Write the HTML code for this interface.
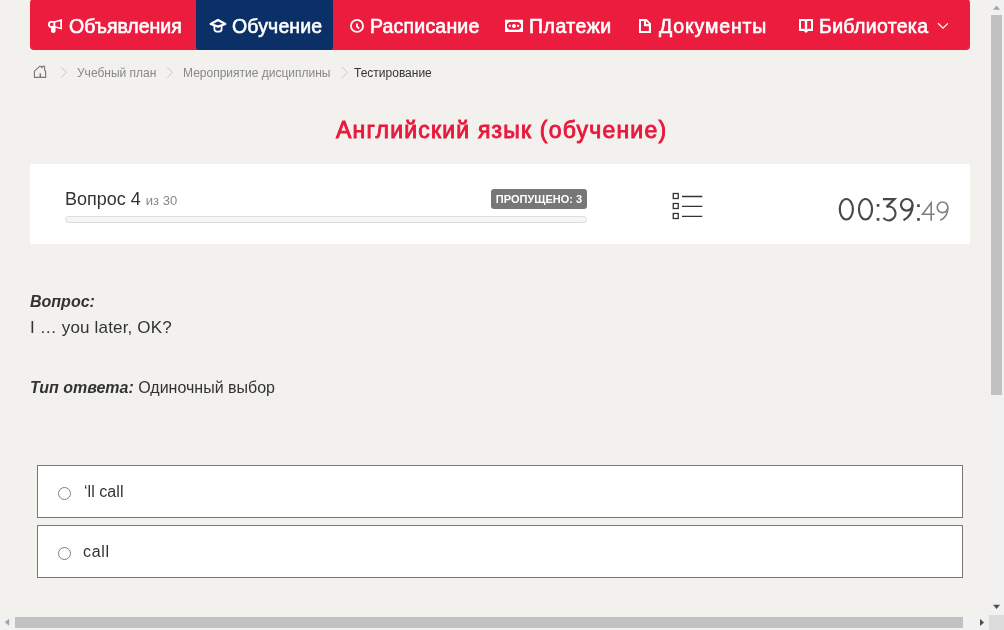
<!DOCTYPE html>
<html><head><meta charset="utf-8">
<style>
*{box-sizing:border-box;margin:0;padding:0}
.ot,.lbl,.bc,#q,#badge,#title,.ni{will-change:transform}
html,body{width:1004px;height:630px;overflow:hidden;background:#f2f1ee;font-family:"Liberation Sans",sans-serif;color:#333;position:relative}
#nav{position:absolute;left:30px;top:-1px;width:940px;height:51px;background:#ec1c3f;border-radius:4px}
#act{position:absolute;left:196px;top:-1px;width:137px;height:51px;background:#0a3067;border-radius:3px}
.ni{position:absolute;top:16px;color:#fff;font-weight:normal;-webkit-text-stroke:0.6px #fff;font-size:19.5px;line-height:20px;white-space:nowrap;transform-origin:0 0}
.ic{position:absolute;top:14px;width:24px;height:24px}
.bc{position:absolute;top:66px;font-size:12px;line-height:14px;color:#888;white-space:nowrap}
.chev{position:absolute;top:66px;width:8px;height:13px}
#title{position:absolute;left:336px;top:116.5px;color:#e8193d;font-weight:normal;-webkit-text-stroke:0.9px #e8193d;font-size:23px;line-height:26px;white-space:nowrap;letter-spacing:1.2px}
#card{position:absolute;left:30px;top:164px;width:940px;height:80px;background:#fff}
#q{position:absolute;left:65px;top:189px;font-size:18px;line-height:20px;color:#333;white-space:nowrap}
#q small{font-size:13px;color:#888}
#prog{position:absolute;left:65px;top:216px;width:522px;height:7px;border:1px solid #ddd;border-radius:4px;background:#f5f5f5}
#badge{position:absolute;left:491px;top:189px;width:96px;height:20px;background:#777;border-radius:3px;color:#fff;font-weight:bold;font-size:11px;line-height:20px;text-align:center;white-space:nowrap}
#timer{position:absolute;left:837px;top:194px;font-size:31px;line-height:34px;color:#4a4a4a;white-space:nowrap;font-weight:normal}
#timer span{font-size:25px;color:#888}
.lbl{position:absolute;left:30px;font-size:16px;line-height:20px;white-space:nowrap}
.opt{position:absolute;left:37px;width:926px;height:53px;border:1px solid #777;background:#fff}
.radio{position:absolute;left:58px;width:13px;height:13px;border:1px solid #808080;border-radius:50%;background:#fff}
.ot{position:absolute;left:83px;font-size:16px;line-height:20px;color:#333;white-space:nowrap}
#vs{position:absolute;left:989px;top:0;width:15px;height:615px;background:#f1f1f1}
#hs{position:absolute;left:0;top:615px;width:989px;height:15px;background:#f1f1f1}
#corner{position:absolute;left:989px;top:615px;width:15px;height:15px;background:#dcdcdc}
.thumb{position:absolute;background:#c1c1c1}
</style></head><body>
<div id="nav"></div>
<div id="act"></div>

<svg class="ic" style="left:44px" viewBox="0 0 24 24"><path fill="#fff" fill-rule="evenodd" d="M4 10.4A3.4 3.4 0 0 1 7.4 7H11L18 5V15.6L11.5 13.8V17.6Q11.5 19 9.25 19Q7 19 7 17.6V13.8H7.4A3.4 3.4 0 0 1 4 10.4ZM7.4 8.8A1.6 1.6 0 0 0 7.4 12H9.4V8.8ZM11.3 8.6V12.2L16.3 13.4V7.3Z"/></svg>
<svg class="ic" style="left:206px" viewBox="0 0 24 24" fill="none" stroke="#fff" stroke-width="1.8" stroke-linejoin="round"><path d="M4.7 10L12 5.9L19.3 10L12 12.7Z" stroke-width="2.3"/><path d="M8.4 11.6V15.2Q8.4 17.7 12 17.7Q15.6 17.7 15.6 15.2V11.6"/></svg>
<svg class="ic" style="left:345px" viewBox="0 0 24 24" fill="none" stroke="#fff" stroke-width="1.8"><circle cx="12" cy="11.9" r="6.05"/><path d="M12 9.6V12.6L14.2 14.5" stroke-width="1.7"/></svg>
<svg class="ic" style="left:502px" viewBox="0 0 24 24"><path fill="#fff" fill-rule="evenodd" d="M3 5.7H21V18H3ZM7.2 8H16.8L19 10.2V13.6L16.8 15.8H7.2L5 13.6V10.2Z"/><rect x="6.9" y="10.8" width="2" height="2" fill="#fff"/><rect x="15.1" y="10.8" width="2" height="2" fill="#fff"/><circle cx="11.95" cy="11.9" r="2" fill="#fff"/></svg>
<svg class="ic" style="left:633px" viewBox="0 0 24 24"><path fill="#fff" fill-rule="evenodd" d="M6 5H13.6L18 9.4V19H6ZM8 7V17H15.9V12.2H11V7ZM13 7V9.9H15.9Z"/></svg>
<svg class="ic" style="left:794px" viewBox="0 0 24 24"><path fill="#fff" fill-rule="evenodd" d="M5 5H11L12 5.6L13 5H19V17H14.2L12 18.9L9.8 17H5ZM7 7V14.7H9.8L10.8 15.4V7ZM13.2 7V15.4L14.2 14.7H17V7Z"/></svg>
<svg class="ic" style="left:930px" viewBox="0 0 24 24" fill="none" stroke="#fff" stroke-width="1.2"><path d="M8 9.3L13 14.2L17.9 9.3"/></svg>

<div class="ni" id="n1" style="left:68.5px;letter-spacing:0px">Объявления</div>
<div class="ni" id="n2" style="left:231.6px;letter-spacing:0.14px">Обучение</div>
<div class="ni" id="n3" style="left:369.7px;letter-spacing:0.2px">Расписание</div>
<div class="ni" id="n4" style="left:528.6px;letter-spacing:0.5px">Платежи</div>
<div class="ni" id="n5" style="left:659px;letter-spacing:0.85px">Документы</div>
<div class="ni" id="n6" style="left:818.8px;letter-spacing:0.33px">Библиотека</div>

<svg style="position:absolute;left:28px;top:60px" width="24" height="24" viewBox="0 0 24 24" fill="none" stroke="#7a7a7a" stroke-width="1.15" stroke-linejoin="round"><path d="M6.4 11.2L11.6 6.4H13.3L14 7.9L14.7 6.4H16.6V10.4L17.6 11.2V17.4H6.4Z"/><path d="M12.3 13.3V17.4" stroke-width="1.5"/></svg>
<svg class="chev" style="left:60px" viewBox="0 0 8 13" fill="none" stroke="#c8c8c8" stroke-width="1"><path d="M1.3 1.2L6.3 6.4L1.3 11.7"/></svg>
<svg class="chev" style="left:166px" viewBox="0 0 8 13" fill="none" stroke="#c8c8c8" stroke-width="1"><path d="M1.3 1.2L6.3 6.4L1.3 11.7"/></svg>
<svg class="chev" style="left:341px" viewBox="0 0 8 13" fill="none" stroke="#c8c8c8" stroke-width="1"><path d="M1.3 1.2L6.3 6.4L1.3 11.7"/></svg>
<div class="bc" style="left:77px">Учебный план</div>
<div class="bc" style="left:183px">Мероприятие дисциплины</div>
<div class="bc" style="left:354px;color:#333">Тестирование</div>

<div id="title">Английский язык (обучение)</div>

<div id="card"></div>
<div id="q">Вопрос 4 <small>из 30</small></div>
<div id="prog"></div>
<div id="badge">ПРОПУЩЕНО: 3</div>
<svg style="position:absolute;left:666px;top:188px" width="44" height="36" viewBox="0 0 44 36" fill="none" stroke="#333" stroke-width="1.3"><rect x="7.25" y="5.5" width="5" height="5"/><rect x="7.25" y="15.5" width="5" height="5"/><rect x="7.25" y="25.5" width="5" height="5"/><path d="M16 8.5H36.3M16 18.3H36.3M16 28.3H36.3"/></svg>
<svg style="position:absolute;left:830px;top:190px" width="130" height="40" viewBox="830 190 130 40" fill="none" stroke-linecap="butt">
<g stroke="#484848" stroke-width="2.2"><ellipse cx="846.35" cy="209.25" rx="6.55" ry="10.25"/><ellipse cx="865.5" cy="209.25" rx="6.55" ry="10.25"/>
<path d="M882.9 199.1H894.5L886.6 206.9A6.85 6.85 0 1 1 883.4 217.9"/>
<circle cx="906.75" cy="204.8" r="5.8"/><path d="M912.55 204.8C912.55 212 909 217.5 903.5 220.3"/></g>
<g fill="#484848"><rect x="876.7" y="204.1" width="2.7" height="2.7" rx="0.5"/><rect x="876.7" y="218.1" width="2.7" height="2.7" rx="0.5"/><rect x="917.1" y="204.2" width="2.7" height="2.7" rx="0.5"/><rect x="917.1" y="218.1" width="2.7" height="2.7" rx="0.5"/></g>
<g stroke="#808080" stroke-width="1.6"><path d="M931.2 220.7V202.8L922.6 214.2H934.7"/><circle cx="942.55" cy="207.35" r="5.3"/><path d="M947.85 207.4C947.85 213.5 945 218 940.2 220.3"/></g>
</svg>

<div class="lbl" style="top:292px;font-weight:bold;font-style:italic">Вопрос:</div>
<div class="lbl" style="top:318px;font-size:17px;letter-spacing:0.16px">I … you later, OK?</div>
<div class="lbl" style="top:378px"><b><i>Тип ответа:</i></b> Одиночный выбор</div>

<div class="opt" style="top:465px"></div>
<div class="radio" style="top:487px"></div>
<div class="ot" style="top:482px;left:83.7px;letter-spacing:0.05px">‘ll call</div>
<div class="opt" style="top:525px"></div>
<div class="radio" style="top:547px"></div>
<div class="ot" style="top:542px;left:83.3px;letter-spacing:0.65px">call</div>

<div id="vs"></div>
<div id="hs"></div>
<div id="corner"></div>
<div class="thumb" style="left:991px;top:15px;width:11px;height:380px"></div>
<div class="thumb" style="left:15px;top:617px;width:948px;height:11px"></div>
<svg style="position:absolute;left:989px;top:0" width="15" height="15" viewBox="0 0 15 15"><path d="M3.9 9.8H11.2L7.55 5.7Z" fill="#a3a3a3"/></svg>
<svg style="position:absolute;left:989px;top:600px" width="15" height="15" viewBox="0 0 15 15"><path d="M4 4.8H11.1L7.55 9Z" fill="#505050"/></svg>
<svg style="position:absolute;left:0;top:615px" width="15" height="15" viewBox="0 0 15 15"><path d="M9.1 3.7V10.8L4.8 7.25Z" fill="#a3a3a3"/></svg>
<svg style="position:absolute;left:974px;top:615px" width="15" height="15" viewBox="0 0 15 15"><path d="M6 3.8V11L10 7.4Z" fill="#505050"/></svg>
</body></html>
